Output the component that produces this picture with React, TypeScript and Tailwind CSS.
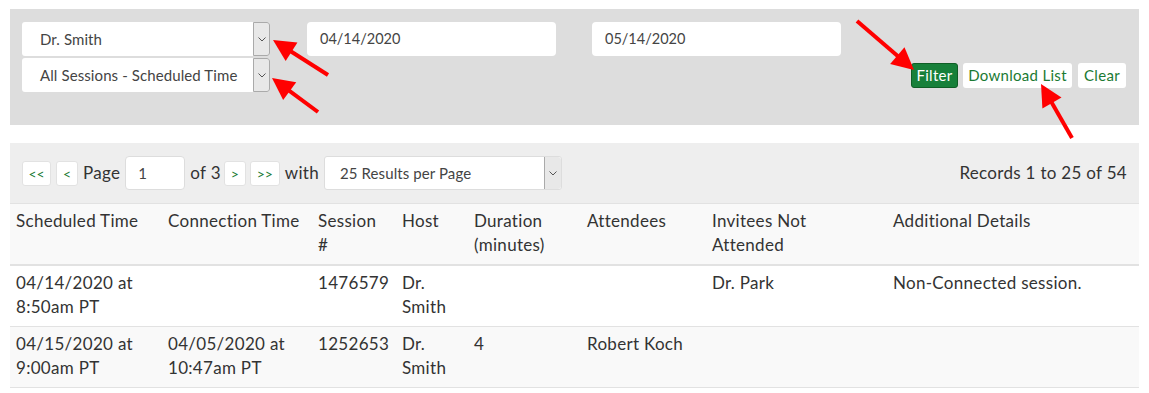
import React from "react";

const font = { fontFamily: "Lato, 'Open Sans', sans-serif" };

function Chevron() {
  return (
    <svg width="8" height="5" viewBox="0 0 8 5" fill="none">
      <path d="M0.5 0.5 L4 4 L7.5 0.5" stroke="#555" strokeWidth="1" />
    </svg>
  );
}

function Select({ label, w }: { label: string; w: string }) {
  return (
    <div className={`flex h-[34px] ${w} rounded-[3px] bg-white`}>
      <div className="flex flex-1 items-center pl-[18px] text-[15px] tracking-[0.1px] text-[#444]">{label}</div>
      <div className="flex w-[17px] items-center justify-center rounded-r-[3px] border border-[#aaa] bg-[#e8e8e8]">
        <Chevron />
      </div>
    </div>
  );
}

function PageBtn({ children, w }: { children: React.ReactNode; w: string }) {
  return (
    <span className={`flex h-[25px] shrink-0 ${w} items-center justify-center rounded-[3px] border border-[#e2e2e2] bg-white text-[14px] tracking-normal text-[#1b7a33]`}>
      {children}
    </span>
  );
}

type Arrow = [number, number, number, number];
const arrows: Arrow[] = [
  [328, 75, 273, 40],
  [318, 112, 272, 78],
  [857, 21, 914, 70],
  [1072, 138, 1041, 84],
];

function ArrowShape({ a }: { a: Arrow }) {
  const [sx, sy, tx, ty] = a;
  const len = Math.hypot(tx - sx, ty - sy);
  const dx = (tx - sx) / len;
  const dy = (ty - sy) / len;
  const L = 22;
  const W = 22;
  const bx = tx - dx * L;
  const by = ty - dy * L;
  const nx = -dy;
  const ny = dx;
  const pts = `${tx},${ty} ${bx + (nx * W) / 2},${by + (ny * W) / 2} ${bx - (nx * W) / 2},${by - (ny * W) / 2}`;
  return (
    <g>
      <line x1={sx} y1={sy} x2={bx + dx * 2} y2={by + dy * 2} stroke="#f00" strokeWidth="4" />
      <polygon points={pts} fill="#f00" />
    </g>
  );
}

const cols = ["w-[152px]", "w-[150px]", "w-[84px]", "w-[72px]", "w-[113px]", "w-[125px]", "w-[181px]", "w-[251px]"];

const header = [
  "Scheduled Time",
  "Connection Time",
  "Session #",
  "Host",
  "Duration (minutes)",
  "Attendees",
  "Invitees Not Attended",
  "Additional Details",
];

const rows = [
  ["04/14/2020 at 8:50am PT", "", "1476579", "Dr. Smith", "", "", "Dr. Park", "Non-Connected session."],
  ["04/15/2020 at 9:00am PT", "04/05/2020 at 10:47am PT", "1252653", "Dr. Smith", "4", "Robert Koch", "", ""],
];

export default function App() {
  return (
    <div className="relative h-[393px] w-[1149px] bg-white text-[#333]" style={font}>
      <div className="px-[10px] pt-[9px]">
        <div className="flex h-[116px] bg-[#dddddd] pl-[12px] pr-[13px] pt-[13px]">
          <div className="flex flex-col gap-[2px]">
            <Select label="Dr. Smith" w="w-[248px]" />
            <Select label="All Sessions - Scheduled Time" w="w-[248px]" />
          </div>
          <div className="ml-[37px] flex h-[34px] w-[249px] items-center rounded-[4px] bg-white pl-[13px] text-[14.5px] text-[#444]">
            04/14/2020
          </div>
          <div className="ml-[36px] flex h-[34px] w-[249px] items-center rounded-[4px] bg-white pl-[13px] text-[14.5px] text-[#444]">
            05/14/2020
          </div>
          <div className="ml-auto mt-[41px] flex h-[25px] gap-[5px] text-[15px] tracking-[0.3px]">
            <span className="flex w-[47px] items-center justify-center rounded-[3px] border border-[#0f5e26] bg-[#17803a] text-white">
              Filter
            </span>
            <span className="flex w-[109px] items-center justify-center rounded-[3px] bg-white text-[#1b7a33]">
              Download List
            </span>
            <span className="ml-[1px] flex w-[48px] items-center justify-center rounded-[3px] bg-white text-[#1b7a33]">
              Clear
            </span>
          </div>
        </div>

        <div className="mt-[18px] flex h-[60px] items-center whitespace-nowrap bg-[#eeeeee] pl-[12px] pr-[12px] text-[17px] tracking-[0.3px]">
          <PageBtn w="w-[29px]">&lt;&lt;</PageBtn>
          <span className="ml-[5px]" />
          <PageBtn w="w-[22px]">&lt;</PageBtn>
          <span className="ml-[5px] shrink-0">Page</span>
          <span className="ml-[5px] flex h-[34px] w-[60px] shrink-0 items-center rounded-[4px] border border-[#ddd] bg-white pl-[12px] text-[15px] text-[#444]">
            1
          </span>
          <span className="ml-[5px] shrink-0">of 3</span>
          <span className="ml-[3px]" />
          <PageBtn w="w-[22px]">&gt;</PageBtn>
          <span className="ml-[4px]" />
          <PageBtn w="w-[30px]">&gt;&gt;</PageBtn>
          <span className="ml-[5px] shrink-0">with</span>
          <div className="ml-[5px] flex h-[34px] w-[238px] shrink-0 rounded-[3px] border border-[#ddd] bg-white">
            <div className="flex flex-1 items-center pl-[15px] text-[15px] tracking-[0.1px] text-[#444]">25 Results per Page</div>
            <div className="flex w-[17px] items-center justify-center rounded-r-[3px] border-l border-[#aaa] bg-[#e8e8e8]">
              <Chevron />
            </div>
          </div>
          <span className="ml-auto">Records 1 to 25 of 54</span>
        </div>

        <div className="flex border-t border-b-2 border-[#e2e2e2] bg-[#f9f9f9] text-[17px] leading-[24px] tracking-[0.3px]">
          {header.map((h, i) => (
            <div key={h} className={`${cols[i]} px-[6px] pt-[5px] pb-[7px]`}>
              {h}
            </div>
          ))}
        </div>
        {rows.map((r, ri) => (
          <div
            key={ri}
            className={`flex border-b border-[#e2e2e2] text-[17px] leading-[24px] tracking-[0.3px] ${ri % 2 === 1 ? "bg-[#f9f9f9]" : "bg-white"}`}
          >
            {r.map((c, i) => (
              <div key={i} className={`${cols[i]} h-[60px] px-[6px] pt-[5px]`}>
                {c}
              </div>
            ))}
          </div>
        ))}
      </div>

      <svg className="pointer-events-none absolute left-0 top-0" width="1149" height="393">
        {arrows.map((a, i) => (
          <ArrowShape key={i} a={a} />
        ))}
      </svg>
    </div>
  );
}
